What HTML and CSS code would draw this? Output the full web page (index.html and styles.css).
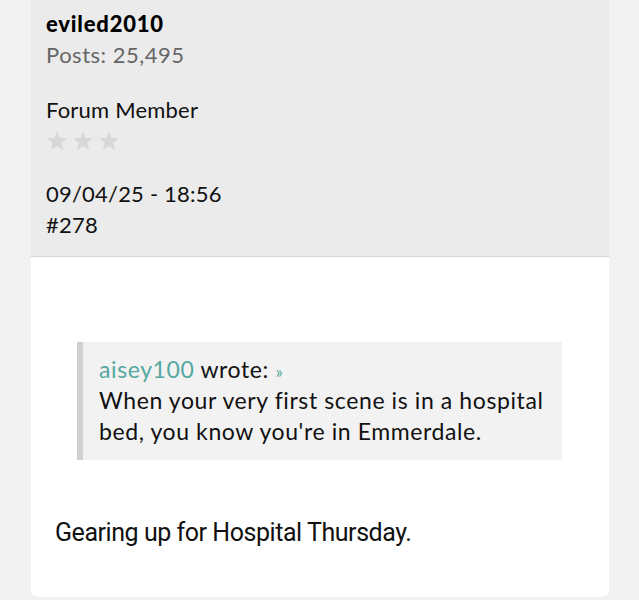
FILE: index.html
```html
<!doctype html>
<html lang="en">

<head>
    <title>Post #278</title>
    <meta charset="utf-8">
    <link rel="stylesheet" href="styles.css">
</head>

<body>
    <div class="innlegg">
        <div class="hode">
            <p class="navn">eviled2010</p>
            <p class="antall">Posts: 25,495</p>
            <p class="rang">Forum Member</p>
            <div class="stjerner">
                <svg width="76" height="22" viewBox="0 0 76 22">
                    <path d="M11 1 L13.6 7.9 L21 8.2 L15.2 12.8 L17.2 20 L11 15.9 L4.8 20 L6.8 12.8 L1 8.2 L8.4 7.9 Z" />
                    <path d="M37 1 L39.6 7.9 L47 8.2 L41.2 12.8 L43.2 20 L37 15.9 L30.8 20 L32.8 12.8 L27 8.2 L34.4 7.9 Z" />
                    <path d="M63 1 L65.6 7.9 L73 8.2 L67.2 12.8 L69.2 20 L63 15.9 L56.8 20 L58.8 12.8 L53 8.2 L60.4 7.9 Z" />
                </svg>
            </div>
            <p class="dato">09/04/25 - 18:56</p>
            <p class="nummer">#278</p>
        </div>
        <div class="kropp">
            <blockquote class="sitat">
                <p><a class="forfatter" href="#">aisey100</a> wrote: <a class="pil" href="#">»</a></p>
                <p>When your very first scene is in a hospital bed, you know you're in Emmerdale.</p>
            </blockquote>
            <p class="tekst">Gearing up for Hospital Thursday.</p>
        </div>
    </div>
</body>

</html>
```

FILE: styles.css
```css
body {
    background-color: rgb(242, 242, 242);
    font-family: Lato, "Noto Sans", sans-serif;
    margin: 0;
    padding: 0 30px 5px 31px;
    color: rgb(17, 17, 17);
}

p {
    margin: 0;
}

.innlegg {
    background-color: white;
    border-radius: 0 0 7px 7px;
}

.hode {
    background-color: rgb(235, 235, 235);
    border-bottom: 1px solid rgb(214, 214, 214);
    padding: 8px 15px 16px 15px;
    font-size: 22px;
    line-height: 31px;
    letter-spacing: 0.2px;
}

.navn {
    font-weight: 900;
    letter-spacing: 0.8px;
    color: black;
}

.antall {
    color: rgb(102, 102, 102);
    letter-spacing: 0.5px;
}

.rang {
    margin-top: 24px;
}

.stjerner {
    height: 28px;
    padding-top: 3px;
}

.stjerner svg {
    fill: rgb(215, 215, 215);
}

.dato {
    margin-top: 22px;
}

.kropp {
    padding: 85px 24px 49px 24px;
    font-size: 23px;
    line-height: 31px;
    letter-spacing: 0.6px;
}

.sitat {
    margin: 0 23px 0 22px;
    background-color: rgb(242, 242, 242);
    border-left: 6px solid rgb(208, 208, 208);
    padding: 12px 6px 13px 16px;
}

.sitat a {
    text-decoration: none;
}

.forfatter {
    color: rgb(84, 168, 160);
}

.pil {
    color: rgb(84, 168, 160);
    font-size: 17px;
    line-height: 0;
}

.tekst {
    margin-top: 57px;
    font-family: Roboto, sans-serif;
    font-size: 25px;
    letter-spacing: -0.45px;
}
```
